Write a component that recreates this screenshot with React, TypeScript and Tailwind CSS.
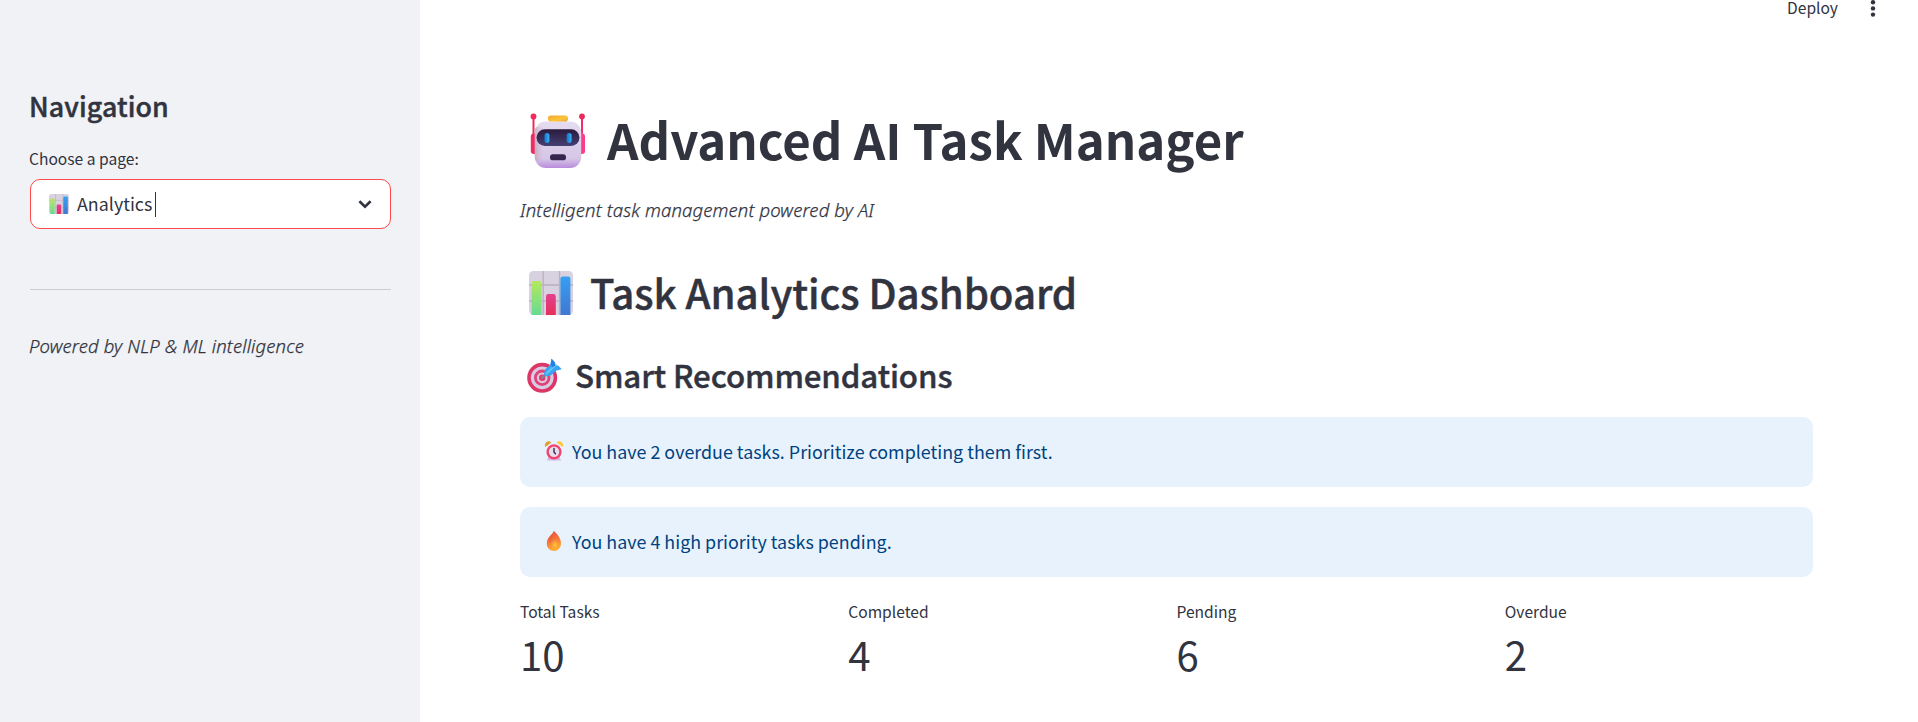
import React from "react";

const semi = "font-medium [-webkit-text-stroke:0.45px_currentColor]";
const italic = "font-['Noto_Sans',sans-serif] text-[18.5px] leading-[30px] font-light tracking-[0.13px] italic [-webkit-text-stroke:0.25px_currentColor]";

function Robot() {
  return (
    <svg viewBox="0 0 56 56" className="h-[56px] w-[56px] shrink-0">
      <defs>
        <linearGradient id="rb" x1="0" y1="0" x2="0" y2="1">
          <stop offset="0" stopColor="#e6dcf0" />
          <stop offset="0.8" stopColor="#d6c6e6" />
          <stop offset="1" stopColor="#b98bdc" />
        </linearGradient>
        <linearGradient id="rl" x1="0" y1="0" x2="1" y2="0">
          <stop offset="0" stopColor="#b79aa8" stopOpacity="0.6" />
          <stop offset="1" stopColor="#cdb6c8" stopOpacity="0" />
        </linearGradient>
        <linearGradient id="rv" x1="0" y1="0" x2="0" y2="1">
          <stop offset="0" stopColor="#2a1a3c" />
          <stop offset="1" stopColor="#463f74" />
        </linearGradient>
        <linearGradient id="ry" x1="0" y1="0" x2="1" y2="1">
          <stop offset="0" stopColor="#f5a52a" />
          <stop offset="0.6" stopColor="#fcc53a" />
          <stop offset="1" stopColor="#eda03a" />
        </linearGradient>
        <linearGradient id="re" x1="0" y1="0" x2="1" y2="0">
          <stop offset="0" stopColor="#1672c4" />
          <stop offset="1" stopColor="#38b2f8" />
        </linearGradient>
      </defs>
      <rect x="2.5" y="3" width="2" height="24" fill="#e5305f" />
      <rect x="51" y="3" width="2" height="24" fill="#f02f68" />
      <circle cx="3.5" cy="3.5" r="2.9" fill="#f4285f" />
      <circle cx="52" cy="3.5" r="2.9" fill="#e82b5c" />
      <rect x="0.8" y="20.5" width="8" height="20.5" rx="3" fill="#ee2e62" />
      <rect x="47" y="20.5" width="8" height="20.5" rx="3" fill="#fb3c86" />
      <rect x="4.8" y="8.5" width="46.4" height="46.5" rx="11" fill="url(#rb)" />
      <rect x="4.8" y="14" width="9" height="34" rx="3" fill="url(#rl)" />
      <rect x="18" y="2.5" width="20" height="6" rx="2.8" fill="url(#ry)" />
      <rect x="6.5" y="16.2" width="43" height="16.8" rx="8.4" fill="url(#rv)" />
      <rect x="14.4" y="20" width="5" height="10" rx="2.5" fill="url(#re)" />
      <rect x="36.6" y="20" width="5" height="10" rx="2.5" fill="url(#re)" />
      <rect x="20" y="41.3" width="16" height="6" rx="2.9" fill="#352650" />
    </svg>
  );
}

function Chart({ id, className }: { id: string; className: string }) {
  return (
    <svg viewBox="0 0 44 44" className={className}>
      <defs>
        <linearGradient id={id + "g"} x1="0" y1="0" x2="0" y2="1">
          <stop offset="0" stopColor="#b5e85c" />
          <stop offset="1" stopColor="#66db93" />
        </linearGradient>
        <linearGradient id={id + "r"} x1="0" y1="0" x2="0" y2="1">
          <stop offset="0" stopColor="#e3418f" />
          <stop offset="1" stopColor="#e5305c" />
        </linearGradient>
        <linearGradient id={id + "b"} x1="0" y1="0" x2="0" y2="1">
          <stop offset="0" stopColor="#35a0f5" />
          <stop offset="1" stopColor="#4078cf" />
        </linearGradient>
      </defs>
      <rect x="0" y="0" width="44" height="44" rx="4.5" fill="#d8d1e0" />
      <path d="M14.2 0V44M30.5 0V44M0 14H44M0 30H44" stroke="#b9afc0" strokeWidth="1.3" />
      <path d="M2.6 44V12.5q0-2.4 2.4-2.4h5q2.4 0 2.4 2.4V44z" fill={`url(#${id}g)`} />
      <path d="M17 44V25.4q0-2.4 2.4-2.4h5q2.4 0 2.4 2.4V44z" fill={`url(#${id}r)`} />
      <path d="M31.4 44V8q0-2.6 2.4-2.6h5.2q2.4 0 2.4 2.6V44z" fill={`url(#${id}b)`} />
    </svg>
  );
}

function Target() {
  return (
    <svg viewBox="0 0 35 35" className="h-[35px] w-[35px] shrink-0">
      <circle cx="15.2" cy="19.8" r="15" fill="#dc3766" />
      <circle cx="15.2" cy="19.8" r="11.4" fill="#d9cbe4" />
      <circle cx="15.2" cy="19.8" r="8.2" fill="#e04476" />
      <circle cx="15.2" cy="19.8" r="5.4" fill="#d8cbe3" />
      <circle cx="15.2" cy="19.8" r="3.2" fill="#ea3567" />
      <path d="M15 20L18.5 16.5" stroke="#7b8797" strokeWidth="2.4" strokeLinecap="round" />
      <path d="M16.8 16.5L18 11.5L23.5 6.5L24.5 0.8L28 4.4L28.3 7.3L31.2 7.6L34.8 11.2L29.5 12.6L24 17.2L18.6 18.6z" fill="#37a5f2" />
      <path d="M19.5 15.5L28.5 7" stroke="#62c2fa" strokeWidth="2.2" strokeLinecap="round" />
      <path d="M24.5 0.8L28 4.4V7.3L25.8 9.6L23.5 6.5z" fill="#2480e0" />
    </svg>
  );
}

function Clock() {
  return (
    <svg viewBox="0 0 20 20" className="h-5 w-5 shrink-0">
      <path d="M2.8 19.6L5 15H15L17.2 19.6z" fill="#d6b8ea" />
      <path d="M1.4 6A3.6 3.6 0 0 1 2 1.6A3.8 3.8 0 0 1 7.4 1.6z" fill="#e0a032" />
      <path d="M12.6 1.6A3.8 3.8 0 0 1 18 1.6A3.6 3.6 0 0 1 18.6 6z" fill="#fbc93d" />
      <circle cx="10" cy="10.8" r="7.6" fill="#f0446f" />
      <circle cx="10" cy="10.8" r="5.2" fill="#e5dcee" />
      <path d="M10 7.6V11L11.4 12.8" stroke="#44304f" strokeWidth="1.5" fill="none" strokeLinecap="round" />
    </svg>
  );
}

function Fire() {
  return (
    <svg viewBox="0 0 20 20" className="h-5 w-5 shrink-0">
      <defs>
        <linearGradient id="fi" x1="0.3" y1="0" x2="0.6" y2="1">
          <stop offset="0" stopColor="#e84a3c" />
          <stop offset="0.5" stopColor="#f57c3a" />
          <stop offset="1" stopColor="#fdb43a" />
        </linearGradient>
        <radialGradient id="fy">
          <stop offset="0" stopColor="#ffd02e" />
          <stop offset="1" stopColor="#fba036" stopOpacity="0.2" />
        </radialGradient>
      </defs>
      <path d="M9.6 0C12.4 2 17 6.6 17 12.3C17 17 14 20 10 20C5.6 20 2.8 17 2.8 12.6C2.8 9.6 4 6.6 7 3.8C8.4 2.6 9.3 1.6 9.6 0z" fill="url(#fi)" />
      <path d="M6.2 11C6 8.6 7 6.4 8.4 4.6" stroke="#dd5a34" strokeWidth="0.9" fill="none" />
      <ellipse cx="11" cy="14" rx="4" ry="5.4" fill="url(#fy)" />
    </svg>
  );
}

const metrics = [
  { label: "Total Tasks", value: "10" },
  { label: "Completed", value: "4" },
  { label: "Pending", value: "6" },
  { label: "Overdue", value: "2" },
];

const alerts = [
  { icon: <Clock />, text: "You have 2 overdue tasks. Prioritize completing them first." },
  { icon: <Fire />, text: "You have 4 high priority tasks pending." },
];

export default function App() {
  return (
    <div className="flex h-[722px] w-full overflow-hidden bg-white font-['Noto_Sans_CJK_SC','Source_Sans_Pro',sans-serif] text-[17.87px] text-[#31333f]">
      <aside className="flex w-[420px] shrink-0 flex-col bg-[#f0f2f6] pl-[30px] pr-[29px] pt-[86px]">
        <h2 className={`-ml-px text-[26.8px] leading-[40px] tracking-[0.1px] ${semi}`}>Navigation</h2>
        <label className="-ml-px mt-[20px] text-[15.6px] leading-[24px]">Choose a page:</label>
        <div className="mt-[9px] flex h-[50px] items-center rounded-[10px] border border-[#ff4b4b] bg-white pl-[18px] pr-[13px]">
          <Chart id="s" className="h-5 w-5 shrink-0" />
          <span className="ml-[8px] pb-[2px] leading-[30px]">Analytics</span>
          <span className="ml-[3px] h-[25px] w-px bg-[#31333f]" />
          <svg viewBox="0 0 24 24" className="ml-auto h-6 w-6">
            <path d="M6.4 9.3L12 14.7L17.6 9.3" fill="none" stroke="#31333f" strokeWidth="2.6" />
          </svg>
        </div>
        <hr className="mt-[60px] border-0 border-t border-[#cbcdd3] [border-top-style:solid]" />
        <p className={`-ml-px mt-[41px] ${italic}`}>Powered by NLP &amp; ML intelligence</p>
      </aside>
      <div className="flex min-w-0 flex-1 flex-col">
        <header className="flex h-[20px] items-start justify-end pr-[40px]">
          <span className="text-[15.6px] leading-[14px]">Deploy</span>
          <svg viewBox="0 0 10 20" className="ml-[30px] h-5 w-[10px]">
            <circle cx="5" cy="2.2" r="2.2" fill="#31333f" />
            <circle cx="5" cy="8.4" r="2.2" fill="#31333f" />
            <circle cx="5" cy="14.6" r="2.2" fill="#31333f" />
          </svg>
        </header>
        <main className="flex flex-col pl-[100px] pr-[105px] pt-[88px]">
          <h1 className="flex h-[66px] items-center pl-[10px] text-[49.15px] leading-[66px] font-bold">
            <Robot />
            <span className="ml-[21px] pb-[4px]">Advanced AI Task Manager</span>
          </h1>
          <p className={`mt-[21px] ${italic}`}>Intelligent task management powered by AI</p>
          <h2 className={`mt-[41px] flex h-[54px] items-center pl-[9px] text-[40.2px] leading-[54px] tracking-[-0.07px] ${semi}`}>
            <Chart id="m" className="h-[44px] w-[44px] shrink-0" />
            <span className="ml-[17px] pb-[2px]">Task Analytics Dashboard</span>
          </h2>
          <h3 className={`mt-[34px] flex h-[42px] items-center pl-[7px] text-[31.25px] leading-[42px] tracking-[-0.1px] ${semi}`}>
            <Target />
            <span className="ml-[13px]">Smart Recommendations</span>
          </h3>
          <div className="mt-[21px] flex flex-col gap-[20px]">
            {alerts.map((a) => (
              <div key={a.text} className="flex h-[70px] items-center rounded-[10px] bg-[#e8f2fc] pb-[2px] pl-[24px] text-[#004280]">
                {a.icon}
                <span className="ml-[8px] leading-[30px] tracking-[0.01px]">{a.text}</span>
              </div>
            ))}
          </div>
          <div className="mt-[22px] grid grid-cols-4 gap-x-[20px]">
            {metrics.map((m) => (
              <div key={m.label}>
                <div className="text-[15.6px] leading-[24px]">{m.label}</div>
                <div className="mt-[3px] text-[40.2px] leading-[56px]">{m.value}</div>
              </div>
            ))}
          </div>
        </main>
      </div>
    </div>
  );
}
